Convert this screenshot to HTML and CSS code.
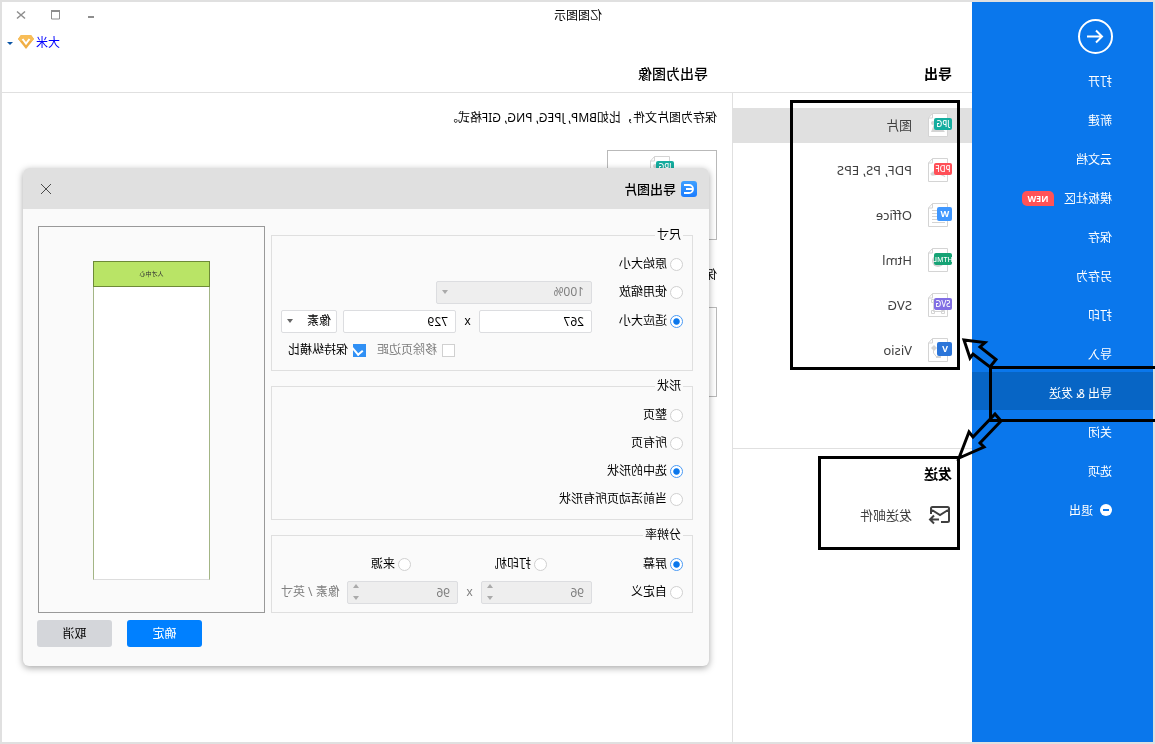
FILE: index.html
```html
<!DOCTYPE html>
<html lang="zh-CN">
<head>
<meta charset="utf-8">
<title>亿图图示</title>
<link rel="stylesheet" href="styles.css">
</head>
<body>
<svg class="defs" aria-hidden="true">
  <defs>
    <symbol id="page" viewBox="0 0 24 24">
      <path d="M4.500 .5H19.500L23.500 5V23.500H4.500Z" fill="#fff" stroke="#d4d4d4"/>
      <path d="M19.500 .5V5H23.500" fill="none" stroke="#d4d4d4"/>
    </symbol>
    <symbol id="jpg" viewBox="0 0 24 24">
      <use href="#page"/>
      <path d="M7 19l4-5 3 2 4-5 3 8z" fill="#d4d4d4"/><circle cx="19" cy="10" r="2" fill="#d4d4d4"/>
      <rect y="5" width="18" height="12" rx="2" fill="#15ad9f"/>
      <text class="tag" x="9" y="14">JPG</text>
    </symbol>
    <symbol id="pdf" viewBox="0 0 24 24">
      <use href="#page"/>
      <path d="M7 19c1-3 4-2 7-4 3-2 7-1 7 1s-4 1-7 0" fill="#d4d4d4" stroke="#d4d4d4"/>
      <rect y="5" width="18" height="12" rx="2" fill="#ff4f57"/>
      <text class="tag" x="9" y="14">PDF</text>
    </symbol>
    <symbol id="office" viewBox="0 0 24 24">
      <use href="#page"/>
      <path d="M15 7.500h5M15 10.500h5M15 13.500h5M15 16.500h5M7 19.500h13" stroke="#d4d4d4" fill="none"/>
      <rect y="4" width="15" height="14" rx="2" fill="#3f97ff"/>
      <text class="tag tag-big" x="7" y="14">W</text>
    </symbol>
    <symbol id="html" viewBox="0 0 24 24">
      <use href="#page"/>
      <circle cx="14" cy="13" r="6" fill="#d4d4d4"/>
      <rect y="5" width="18" height="12" rx="2" fill="#16a375"/>
      <text class="tag tag-small" x="9" y="14">HTML</text>
    </symbol>
    <symbol id="svg" viewBox="0 0 24 24">
      <use href="#page"/>
      <path d="M8.500 7.500v11h10v-11zM7.500 17.500h3v3h-3zM17.500 17.500h3v3h-3zM17.500 6.500h3v3h-3z" fill="#fff" stroke="#d4d4d4"/>
      <rect y="5" width="18" height="12" rx="2" fill="#816ee4"/>
      <text class="tag" x="9" y="14">SVG</text>
    </symbol>
    <symbol id="visio" viewBox="0 0 24 24">
      <use href="#page"/>
      <path d="M18.500 9v6l-4 5" fill="none" stroke="#d4d4d4"/><path d="M18 7l3 3-3 3-3-3z" fill="#d4d4d4"/><path d="M11 18h5v2h-5z" fill="#d4d4d4"/>
      <rect y="4" width="15" height="14" rx="2" fill="#2b75d9"/>
      <text class="tag tag-big" x="7" y="14">V</text>
    </symbol>
  </defs>
</svg>

<div class="window">
  <nav class="sidebar">
    <button class="back" aria-label="返回">
      <svg width="35" height="35" viewBox="0 0 35 35" fill="none" stroke="#fff" stroke-width="2"><circle cx="17.500" cy="17.500" r="16.500"/><path d="M26 17.500H10.500M17 11.500l-6 6 6 6"/></svg>
    </button>
    <a class="nav" href="#">打开</a>
    <a class="nav" href="#">新建</a>
    <a class="nav" href="#">云文档</a>
    <a class="nav" href="#">模板社区<span class="new">NEW</span></a>
    <a class="nav" href="#">保存</a>
    <a class="nav" href="#">另存为</a>
    <a class="nav" href="#">打印</a>
    <a class="nav" href="#">导入</a>
    <a class="nav active" href="#">导出 &amp; 发送</a>
    <a class="nav" href="#">关闭</a>
    <a class="nav" href="#">选项</a>
    <a class="nav exit" href="#"><svg width="12" height="12" viewBox="0 0 12 12"><circle cx="6" cy="6" r="6" fill="#fff"/><path d="M3 6h6" stroke="#0a77ec" stroke-width="2"/></svg>退出</a>
  </nav>

  <div class="workspace">
    <header class="top">
      <div class="titlebar">
        <span class="app-title">亿图图示</span>
        <div class="controls">
          <button aria-label="最小化"><svg width="12" height="12" viewBox="0 0 12 12"><path d="M3 7h6" stroke="#8e8e8e" stroke-width="2"/></svg></button>
          <button aria-label="最大化"><svg width="12" height="12" viewBox="0 0 12 12"><path d="M2.500 1h8v8h-8z" fill="none" stroke="#8e8e8e"/><path d="M2 1h9" stroke="#8e8e8e" stroke-width="2"/></svg></button>
          <button aria-label="关闭"><svg width="12" height="12" viewBox="0 0 12 12"><path d="M2 1.500l8 7M10 1.500L2 8.500" stroke="#8e8e8e" stroke-width="1.500"/></svg></button>
        </div>
      </div>
      <div class="account">
        <a href="#">大米</a>
        <svg class="vip" width="16" height="14" viewBox="0 0 16 14"><path d="M3 0h10l3 4-8 10L0 4z" fill="#f0ae45"/><path d="M3 0h10l3 4-2 2H2L0 4z" fill="#f8bd57"/><path d="M4.500 4L8 8.500 11.500 4" fill="none" stroke="#fff" stroke-width="2"/></svg>
        <svg class="caret" width="6" height="3" viewBox="0 0 6 3"><path d="M0 0h6L3 3z" fill="#0a55a5"/></svg>
      </div>
      <div class="headings">
        <h2>导出</h2>
        <h2 class="main-heading">导出为图像</h2>
      </div>
    </header>

    <div class="columns">
      <aside class="types">
        <div class="formats">
          <a class="type selected" href="#"><svg class="ico"><use href="#jpg"/></svg>图片</a>
          <a class="type" href="#"><svg class="ico"><use href="#pdf"/></svg>PDF, PS, EPS</a>
          <a class="type" href="#"><svg class="ico"><use href="#office"/></svg>Office</a>
          <a class="type" href="#"><svg class="ico"><use href="#html"/></svg>Html</a>
          <a class="type" href="#"><svg class="ico"><use href="#svg"/></svg>SVG</a>
          <a class="type" href="#"><svg class="ico"><use href="#visio"/></svg>Visio</a>
        </div>
        <div class="send">
          <h2>发送</h2>
          <a class="type" href="#"><svg class="ico" viewBox="0 0 24 24" fill="none" stroke="#404040" stroke-width="2"><path d="M11 19H4.500Q3 19 3 17.500V5.500Q3 4 4.500 4H19.500Q21 4 21 5.500V11M4 7l8 5L20 7M13 16.500H21M18 12.500l4 4-4 4"/></svg>发送邮件</a>
        </div>
      </aside>
      <main class="content">
        <p>保存为图片文件，比如BMP, JPEG, PNG, GIF格式。</p>
        <button class="tile" aria-label="JPG"><svg class="ico"><use href="#jpg"/></svg></button>
        <p>保存</p>
        <button class="tile" aria-label="图片"></button>
      </main>
    </div>
  </div>

  <section class="dialog" role="dialog" aria-labelledby="dlg-title">
    <div class="dialog-head">
      <svg width="16" height="16" viewBox="0 0 16 16"><defs><linearGradient id="lg" x1="0" y1="0" x2="0" y2="1"><stop offset="0" stop-color="#3fa0ff"/><stop offset="1" stop-color="#1a7cff"/></linearGradient></defs><rect width="16" height="16" rx="3" fill="url(#lg)"/><path d="M13 4H8a4 4 0 0 0 0 8h5M4 8h7" fill="none" stroke="#fff" stroke-width="1.800"/></svg>
      <h1 id="dlg-title">导出图片</h1>
      <button class="close" aria-label="关闭"><svg width="12" height="12" viewBox="0 0 12 12"><path d="M1 1l10 10M11 1L1 11" stroke="#4a4a4a" fill="none"/></svg></button>
    </div>
    <form class="dialog-body">
      <div class="options">
        <fieldset>
          <legend>尺寸</legend>
          <div class="row"><label><input type="radio" name="size">原始大小</label></div>
          <div class="row"><label><input type="radio" name="size">使用缩放</label>
            <span class="combo zoom"><select aria-label="缩放" disabled><option>100%</option></select></span></div>
          <div class="row tall"><label><input type="radio" name="size" checked>适应大小</label>
            <div class="fields"><input class="field" type="text" value="267" aria-label="宽"><span class="times">x</span><input class="field" type="text" value="729" aria-label="高"><span class="combo unit"><select aria-label="单位"><option>像素</option></select></span></div></div>
          <div class="row checks"><label class="muted"><input type="checkbox">移除页边距</label><label><input type="checkbox" checked>保持纵横比</label></div>
        </fieldset>
        <fieldset>
          <legend>形状</legend>
          <div class="row"><label><input type="radio" name="shape">整页</label></div>
          <div class="row"><label><input type="radio" name="shape">所有页</label></div>
          <div class="row wide"><label><input type="radio" name="shape" checked>选中的形状</label></div>
          <div class="row wide"><label><input type="radio" name="shape">当前活动页所有形状</label></div>
        </fieldset>
        <fieldset>
          <legend>分辨率</legend>
          <div class="row thirds"><label><input type="radio" name="res" checked>屏幕</label><label><input type="radio" name="res">打印机</label><label><input type="radio" name="res">来源</label></div>
          <div class="row"><label><input type="radio" name="res">自定义</label>
            <div class="fields muted"><span class="spin"><input class="field" type="text" value="96" aria-label="水平分辨率" disabled></span><span class="times">x</span><span class="spin"><input class="field" type="text" value="96" aria-label="垂直分辨率" disabled></span><span class="per">像素 / 英寸</span></div></div>
        </fieldset>
      </div>
      <div class="preview"><div class="sheet"><div class="sheet-head">人才中心</div></div></div>
      <div class="actions"><button type="button" class="btn primary">确定</button><button type="button" class="btn">取消</button></div>
    </form>
  </section>

  <svg class="marks" width="400" height="744" viewBox="0 0 400 744" fill="none" stroke="#000" stroke-width="3">
    <path d="M196.500 101.500h167v267h-167zM196.500 457.500h139v91h-139zM0 367.500h164.500v53H0"/>
    <path d="M191 340L170 342.500 175 347 159 359.500 165 367 182 354 185 358zM196 458L186 432 182 437 160 414 154 421 175 443 171 447z"/>
  </svg>
</div>
</body>
</html>
```
FILE: styles.css
```css
* { box-sizing: border-box; }
body {
  margin: 0;
  background: #fff;
  color: #000;
  font: 12px/16px "Noto Sans", "Noto Sans CJK SC", sans-serif;
  font-kerning: none;
  transform: scaleX(-1);
}
a { color: inherit; text-decoration: none; }
button, input, select { font: inherit; color: inherit; }
button { padding: 0; border: 0; background: none; }
h1, h2, p { margin: 0; }
.defs { position: absolute; width: 0; height: 0; }
.window {
  position: relative;
  display: flex;
  min-height: 744px;
  border: 2px solid #e0e0e0;
}
.sidebar {
  width: 181px;
  flex: none;
  display: flex;
  flex-direction: column;
  background: #0a77ec;
  color: #fff;
}
.back { display: flex; margin: 17px 0 6px 40px; width: 35px; height: 35px; }
.nav {
  display: flex;
  align-items: center;
  height: 38px;
  margin-bottom: 1px;
  padding: 6px 0 0 41px;
}
.active { background: #0765c5; }
.new {
  margin: 0 0 2px 10px;
  width: 32px;
  height: 15px;
  border-radius: 5px 5px 5px 0;
  background: #ff5257;
  font-size: 9px;
  line-height: 15px;
  font-weight: 700;
  text-align: center;
}
.exit svg { margin: 0 7px 2px 0; }
.workspace { flex: 1; display: flex; flex-direction: column; min-width: 0; }
.top { border-bottom: 1px solid #e0e0e0; }
.titlebar { display: flex; align-items: center; height: 27px; }
.app-title { margin-right: auto; margin-left: 370px; }
.controls { display: flex; gap: 23px; margin-right: 13px; }
.controls button { width: 12px; height: 12px; }
.controls svg { display: block; }
.account { display: flex; justify-content: flex-end; align-items: center; gap: 2px; height: 28px; padding-right: 5px; }
.account a { color: #00f; }
.vip { margin-bottom: 3px; }
.caret { margin-left: 3px; }
.headings { display: grid; grid-template-columns: 240px 1fr; height: 35px; padding-bottom: 2px; align-items: center; }
h2 { font-size: 14px; line-height: 20px; font-weight: 700; padding-left: 20px; }
.main-heading { padding-left: 24px; font-weight: 500; }
.columns { flex: 1; display: grid; grid-template-columns: 240px 1fr; }
.types { border-right: 1px solid #e0e0e0; }
.formats { height: 356px; padding-top: 10px; border-bottom: 1px solid #e0e0e0; }
.type {
  display: flex;
  align-items: center;
  gap: 16px;
  height: 35px;
  margin: 5px 0 10px;
  padding: 0 0 1px 20px;
  color: #404040;
  font-size: 13px;
}
.selected { background: #e0e0e0; }
.ico { width: 24px; height: 24px; flex: none; }
.send { padding-top: 15px; }
.send .type { margin-top: 14px; }
.tag { fill: #fff; font-size: 8px; font-weight: 500; text-anchor: middle; }
.tag-big { font-size: 9px; font-weight: 700; }
.tag-small { font-size: 7px; }
.content { padding: 16px 15px; }
.tile { display: flex; justify-content: center; width: 110px; height: 90px; margin: 24px 0 26px; padding-top: 5px; border: 1px solid #b9b9b9; }
.content p { line-height: 17px; }

.dialog {
  position: absolute;
  top: 166px;
  left: 444px;
  right: 21px;
  border-radius: 6px;
  background: #fafafa;
  box-shadow: 0 2px 7px rgba(0, 0, 0, .35);
}
.dialog-head {
  display: flex;
  align-items: center;
  height: 41px;
  padding: 0 17px 0 12px;
  border-radius: 6px 6px 0 0;
  background: #e0e0e0;
}
h1 { margin-left: 5px; font-size: 13px; line-height: 18px; font-weight: 500; }
.close { margin-left: auto; width: 12px; height: 12px; }
.close svg { display: block; }
.dialog-body {
  display: grid;
  grid-template-columns: 1fr 227px;
  column-gap: 6px;
  row-gap: 7px;
  padding: 17px 15px 19px 16px;
}
.options { display: flex; flex-direction: column; gap: 7px; padding-top: 1px; min-width: 0; }
fieldset { margin: 0; padding: 7px 9px 6px; border: 1px solid #dfdfdf; min-width: 0; }
legend { padding: 0 2px; line-height: 16px; }
.row { display: grid; grid-template-columns: 91px 1fr; align-items: center; height: 28px; }
.tall { height: 30px; }
.wide { grid-template-columns: 1fr; }
.thirds { grid-template-columns: repeat(3, 136px); }
.checks { display: flex; justify-content: flex-end; gap: 11px; padding-right: 7px; }
label { display: flex; align-items: center; gap: 3px; white-space: nowrap; }
.checks label { gap: 5px; }
.muted { color: #808080; }
input[type=radio], input[type=checkbox] {
  appearance: none;
  width: 13px;
  height: 13px;
  margin: 0;
  border: 1px solid #d0d0d0;
  background: #fff;
}
input[type=radio] { border-radius: 50%; }
input[type=radio]:checked {
  border-color: #4a9af5;
  background: radial-gradient(circle closest-side, #0a77ec 50%, #fff 68%);
}
input[type=checkbox]:checked { position: relative; border-color: #3090f5; background: #3090f5; }
input[type=checkbox]:checked::after {
  content: "";
  position: absolute;
  left: 4px;
  top: 0;
  width: 5px;
  height: 8px;
  border: solid #fff;
  border-width: 0 2px 2px 0;
  transform: rotate(40deg);
}
.fields { display: flex; align-items: center; }
.field, select {
  display: block;
  width: 113px;
  height: 23px;
  margin: 0;
  padding: 0 7px;
  border: 1px solid #dcdde0;
  border-radius: 2px;
  background: #fff;
  appearance: none;
}
.field:disabled, select:disabled { background: #eee; color: #808080; opacity: 1; }
.times { width: 23px; text-align: center; }
.combo, .spin { position: relative; }
.zoom { width: 156px; }
.unit { width: 56px; margin-left: 6px; }
.combo select { width: 100%; }
.unit select { padding: 0 5px; }
.combo::after {
  content: "";
  position: absolute;
  right: 6px;
  top: 9px;
  border: solid transparent;
  border-width: 4px 3px 0;
  border-top-color: #666;
}
.zoom::after { border-top-color: #aaa; }
.spin .field { width: 111px; }
.spin::before, .spin::after {
  content: "";
  position: absolute;
  right: 6px;
  border: solid transparent;
}
.spin::before { top: 3px; border-width: 0 3px 4px; border-bottom-color: #aaa; }
.spin::after { bottom: 4px; border-width: 4px 3px 0; border-top-color: #aaa; }
.per { margin-left: auto; white-space: nowrap; }
.preview {
  display: flex;
  justify-content: center;
  padding: 34px 0 32px;
  border: 1px solid #999;
}
.sheet { width: 117px; background: #fff; border: 1px solid #a3b585; border-bottom-color: #ddd; }
.sheet-head {
  margin: -1px -1px 0;
  height: 26px;
  border: 1px solid #6d8a37;
  background: #b9e466;
  font-size: 6px;
  line-height: 25px;
  text-align: center;
  color: #333;
}
.actions { grid-column: 1 / -1; display: flex; justify-content: flex-end; gap: 15px; margin-right: -1px; }
.btn { width: 75px; height: 27px; border-radius: 3px; background: #d4d6da; }
.primary { background: #0080ff; color: #fff; }
.marks { position: absolute; top: -2px; left: -2px; pointer-events: none; }
```
